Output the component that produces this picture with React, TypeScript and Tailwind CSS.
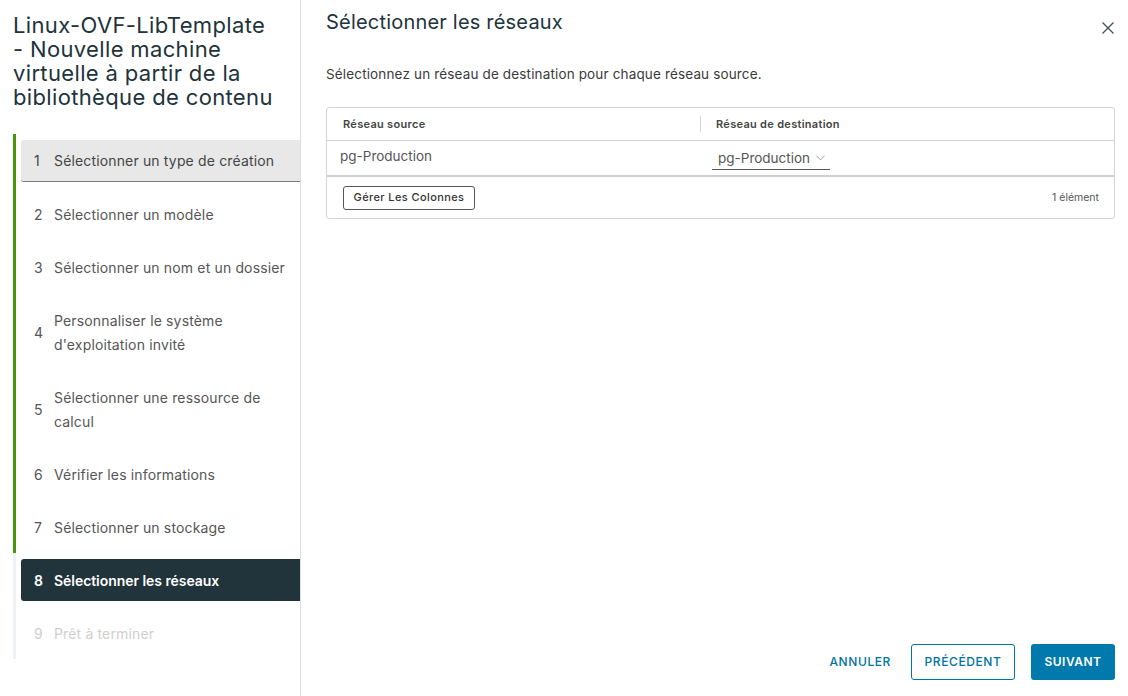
import React from "react";

const steps: { n: number; label: React.ReactNode; lines: number; state: "done" | "current" | "todo"; first?: boolean }[] = [
  { n: 1, label: "Sélectionner un type de création", lines: 1, state: "done", first: true },
  { n: 2, label: "Sélectionner un modèle", lines: 1, state: "done" },
  { n: 3, label: "Sélectionner un nom et un dossier", lines: 1, state: "done" },
  { n: 4, label: <>Personnaliser le système<br />d'exploitation invité</>, lines: 2, state: "done" },
  { n: 5, label: <>Sélectionner une ressource de<br />calcul</>, lines: 2, state: "done" },
  { n: 6, label: "Vérifier les informations", lines: 1, state: "done" },
  { n: 7, label: "Sélectionner un stockage", lines: 1, state: "done" },
  { n: 8, label: "Sélectionner les réseaux", lines: 1, state: "current" },
  { n: 9, label: "Prêt à terminer", lines: 1, state: "todo" },
];

export default function App() {
  return (
    <div
      className="flex w-[1128px] h-[696px] bg-white overflow-hidden"
      style={{ fontFamily: "Inter, 'Noto Sans', sans-serif" }}
    >
      {/* Left panel */}
      <div className="w-[301px] shrink-0 border-r border-[#d7dde0] flex flex-col">
        <h1 className="pl-[13px] pt-[13px] text-[22px] leading-[24px] text-[#21333b] font-normal tracking-[0.35px]">
          Linux-OVF-LibTemplate
          <br />- Nouvelle machine
          <br />virtuelle à partir de la
          <br />bibliothèque de contenu
        </h1>
        <div className="mt-[25px] ml-[13px] flex flex-col">
          {steps.map((s) => (
            <div
              key={s.n}
              className={
                "border-l-[3px] pl-[5px] py-[5.5px] " +
                (s.state === "done" ? "border-[#48960c]" : "border-[#eef1f3]")
              }
            >
              <div
                className={
                  "flex items-center px-[13px] pt-[2px] text-[14px] leading-[24px] rounded-l-[3px] " +
                  (s.lines === 1 ? "h-[42px] " : "h-[66px] ") +
                  (s.first
                    ? "bg-[#e8e8e8] border-b border-[#7a7a7a] text-[#454545] tracking-[0.15px]"
                    : s.state === "current"
                    ? "bg-[#21333b] text-white font-semibold tracking-[-0.05px]"
                    : s.state === "todo"
                    ? "text-[#cfcfcf] tracking-[0.15px]"
                    : "text-[#565656] tracking-[0.15px]")
                }
              >
                <span className="w-[20px] shrink-0">{s.n}</span>
                <span>{s.label}</span>
              </div>
            </div>
          ))}
        </div>
      </div>

      {/* Right panel */}
      <div className="flex-1 flex flex-col relative">
        <div className="flex items-start justify-between pl-[25px] pr-[13px] pt-[9px]">
          <h2 className="text-[20px] leading-[26px] tracking-[0.2px] text-[#21333b] font-normal">Sélectionner les réseaux</h2>
          <button className="mt-[12px] text-[#49555c]">
            <svg width="14" height="14" viewBox="0 0 14 14" fill="none" stroke="currentColor" strokeWidth="1.4">
              <path d="M1.5 1.5 L12.5 12.5 M12.5 1.5 L1.5 12.5" />
            </svg>
          </button>
        </div>
        <p className="pl-[25px] mt-[30px] text-[13.5px] tracking-[0.15px] leading-[18px] text-[#3a3a3a]">
          Sélectionnez un réseau de destination pour chaque réseau source.
        </p>

        <div className="ml-[25px] mr-[13px] mt-[24px] border border-[#d4d4d4] rounded-[3px]">
          <div className="flex h-[33px] items-center border-b border-[#d4d4d4] text-[11px] tracking-[0.3px] font-semibold text-[#454545]">
            <div className="w-[374px] pl-[16px] flex items-center justify-between">
              <span>Réseau source</span>
              <span className="w-px h-[16px] bg-[#d4d4d4]" />
            </div>
            <div className="pl-[15px]">Réseau de destination</div>
          </div>
          <div className="flex h-[36px] border-b-2 border-[#cfcfcf] text-[13.5px] text-[#565656]">
            <div className="w-[374px] pl-[13px] pt-[5px]">pg-Production</div>
            <div className="pl-[11px] pt-[6px]">
              <div className="w-[118px] h-[23px] border-b border-[#565656] flex items-center pl-[6px] gap-[6px]">
                <span>pg-Production</span>
                <svg width="9" height="6" viewBox="0 0 9 6" fill="none" stroke="#9a9a9a" strokeWidth="1">
                  <path d="M0.5 0.8 L4.5 4.8 L8.5 0.8" />
                </svg>
              </div>
            </div>
          </div>
          <div className="flex items-center justify-between h-[41px] pl-[16px] pr-[15px]">
            <button className="h-[24px] w-[132px] border border-[#565656] rounded-[3px] text-[11px] tracking-[0.4px] text-[#333] font-medium">
              Gérer Les Colonnes
            </button>
            <span className="text-[10.5px] text-[#565656]">1 élément</span>
          </div>
        </div>

        <div className="mt-auto flex items-center justify-end pr-[13px] pb-[16px]">
          <button className="h-[36px] text-[12px] font-medium tracking-[0.6px] text-[#0072a3]">ANNULER</button>
          <button className="ml-[20px] h-[36px] w-[104px] border border-[#0072a3] rounded-[3px] text-[12px] font-medium tracking-[0.6px] text-[#0072a3]">
            PRÉCÉDENT
          </button>
          <button className="ml-[16px] h-[36px] w-[84px] bg-[#0079ad] rounded-[3px] text-[12px] font-semibold tracking-[0.5px] text-white">
            SUIVANT
          </button>
        </div>
      </div>
    </div>
  );
}
